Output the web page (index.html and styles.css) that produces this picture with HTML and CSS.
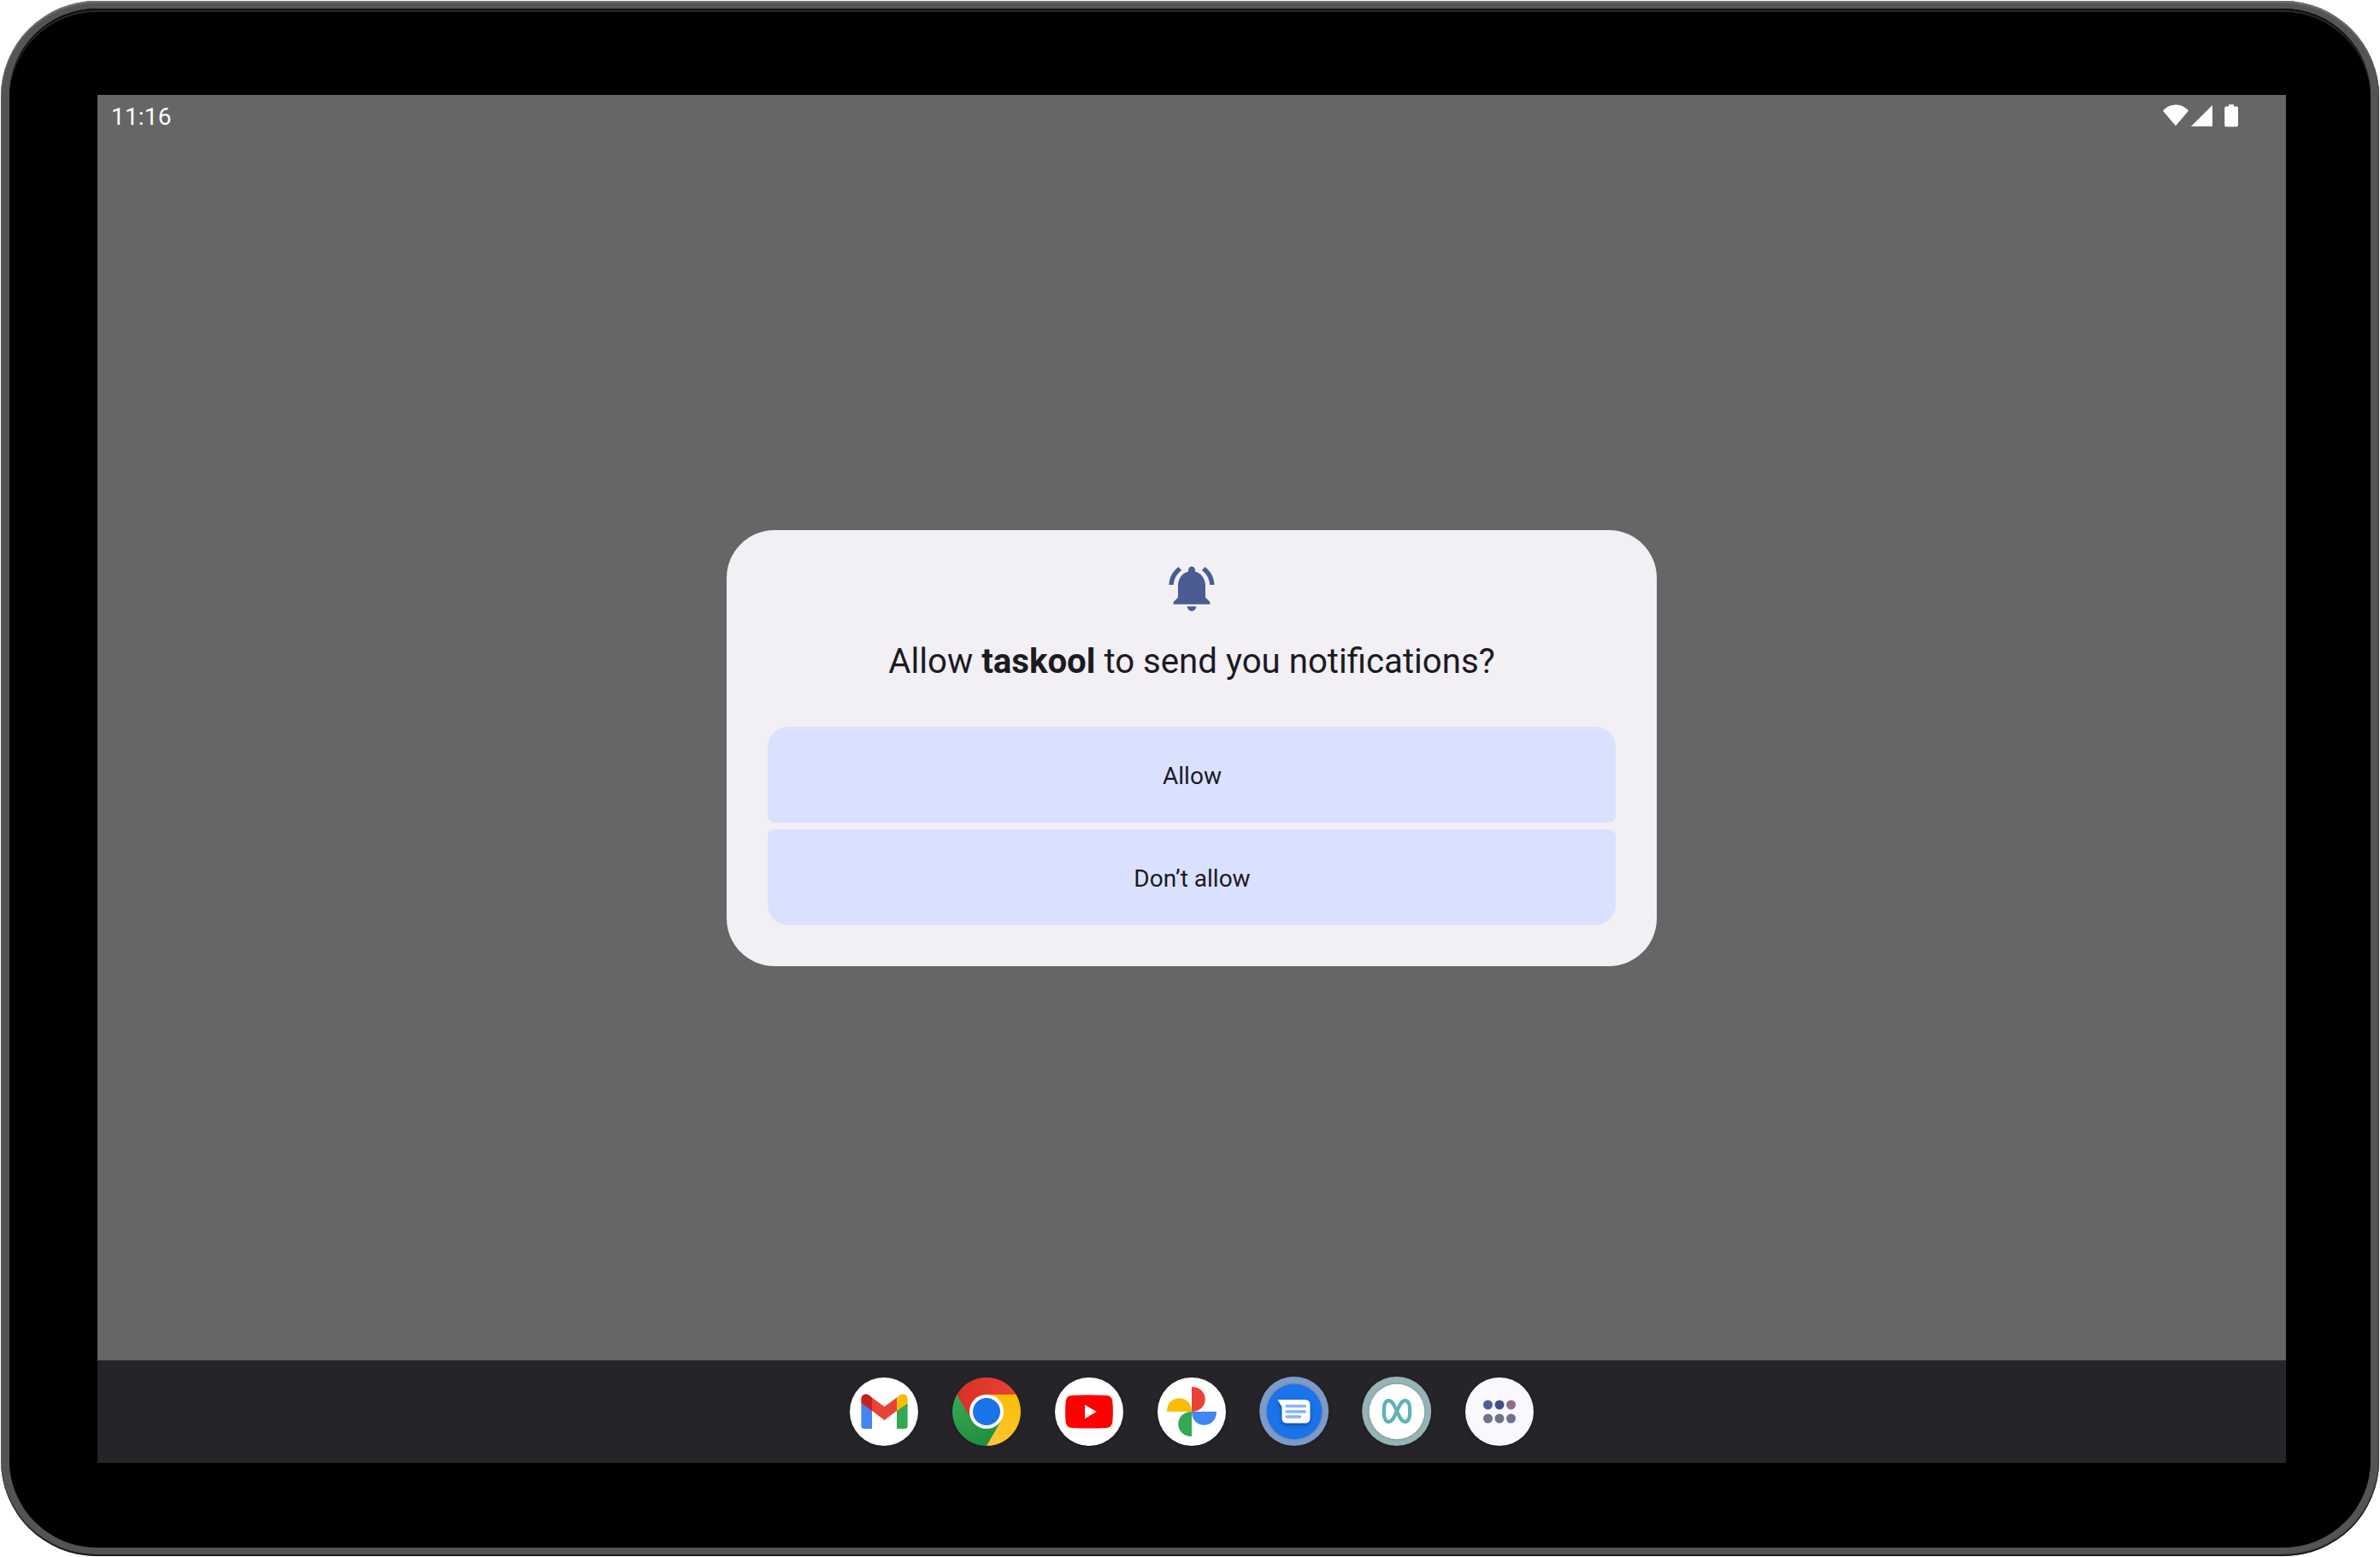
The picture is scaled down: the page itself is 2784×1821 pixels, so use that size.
FILE: index.html
```html
<!DOCTYPE html>
<html lang="en">
<head>
<meta charset="utf-8">
<title>Notification permission</title>
<link rel="stylesheet" href="styles.css">
</head>
<body>
<div class="device">
  <div class="bezel">
    <div class="screen">
      <header class="status-bar">
        <span class="clock">11:16</span>
        <svg class="status-icons" width="90" height="28" viewBox="0 0 90 28" fill="#fff">
          <path d="M0 7.5C8-1.8 22-1.8 30 7.5L15 25.3z"/>
          <path d="M58 1v24.7H33z"/>
          <path d="M77 .3h6v2.2h3.2q1.8 0 1.8 1.8v20.2q0 1.8-1.8 1.8H74q-1.8 0-1.8-1.8V4.3q0-1.8 1.8-1.8h3z"/>
        </svg>
      </header>
      <main class="scrim">
        <section class="dialog" role="dialog">
          <svg class="bell" viewBox="0 0 24 24" fill="#4b5c92">
            <path d="M7.58 4.08L6.15 2.65C3.75 4.48 2.17 7.3 2.03 10.5h2c.15-2.65 1.51-4.97 3.55-6.42zM19.97 10.5h2c-.15-3.2-1.73-6.02-4.12-7.85l-1.42 1.43c2.02 1.45 3.39 3.77 3.54 6.42zM18 11c0-3.07-1.64-5.64-4.5-6.32V4c0-.83-.67-1.6-1.5-1.6s-1.5.77-1.5 1.6v.68C7.63 5.36 6 7.92 6 11v5l-2 2v1h16v-1l-2-2zM10 20a2 2 0 0 0 4 0z"/>
          </svg>
          <h1 class="title">Allow <b>taskool</b> to send you notifications?</h1>
          <div class="actions">
            <button class="action">Allow</button>
            <button class="action">Don’t allow</button>
          </div>
        </section>
      </main>
      <nav class="taskbar">
        <svg class="app" viewBox="0 0 80 80">
          <circle cx="40" cy="40" r="40" fill="#fff"/>
          <path d="M13.4 30v26.5q0 3.5 3.5 3.5H26V38.5z" fill="#4285f4"/>
          <path d="M67.7 30v26.5q0 3.5-3.5 3.5H55V38.5z" fill="#34a853"/>
          <path d="M26 39V23.5L40.5 34.3 55 23.5V39L40.5 50z" fill="#ea4335"/>
          <path d="M13.4 30.2V25c0-5.2 6-7.2 9.5-4L26 23.5V39z" fill="#c5221f"/>
          <path d="M67.7 30.2V25c0-5.2-6-7.2-9.5-4L55 23.5V39z" fill="#fbbc04"/>
        </svg>
        <svg class="app" viewBox="0 0 80 80">
          <defs>
            <linearGradient id="cr" x1="0" x2="1"><stop stop-color="#d93025"/><stop offset="1" stop-color="#ea4335"/></linearGradient>
            <linearGradient id="cy" x1=".3" y1="1" x2=".6" y2="0"><stop stop-color="#fcc934"/><stop offset="1" stop-color="#fbbc04"/></linearGradient>
            <linearGradient id="cg" x1=".7" y1="1" x2=".2" y2="0"><stop stop-color="#1e8e3e"/><stop offset="1" stop-color="#34a853"/></linearGradient>
          </defs>
          <path d="M40 40L5.36 20A40 40 0 0 0 40 80L60 46z" fill="url(#cg)"/>
          <path d="M40 20h34.64A40 40 0 0 1 40 80L57.32 50z" fill="url(#cy)"/>
          <path d="M5.36 20A40 40 0 0 1 74.64 20H40L22.68 50z" fill="url(#cr)"/>
          <circle cx="40" cy="40" r="20" fill="#fff"/>
          <circle cx="40" cy="40" r="16" fill="#1a73e8"/>
        </svg>
        <svg class="app" viewBox="0 0 80 80">
          <circle cx="40" cy="40" r="40" fill="#fff"/>
          <path d="M20 21Q40 19.8 60 21 66.5 21.3 67.3 27.5 68.5 40 67.3 52.500 66.5 58.7 60 59 40 60.2 20 59 13.5 58.7 12.7 52.5 11.5 40 12.7 27.5 13.5 21.3 20 21z" fill="#f00"/>
          <path d="M35 32v16.2L48.7 40z" fill="#fff"/>
        </svg>
        <svg class="app" viewBox="0 0 80 80">
          <circle cx="40" cy="40" r="40" fill="#fff"/>
          <path d="M40 11c21 0 21 29 0 29z" fill="#ea4335"/>
          <path d="M69 40c0 21-29 21-29 0z" fill="#4285f4"/>
          <path d="M40 69c-21 0-21-29 0-29z" fill="#34a853"/>
          <path d="M11 40c0-21 29-21 29 0z" fill="#fbbc04"/>
        </svg>
        <svg class="app" viewBox="0 0 80 80">
          <circle cx="39.7" cy="39.5" r="40.5" fill="#7c9bc9"/>
          <circle class="badge-disc" cx="40" cy="40" r="32.3" fill="#1a73e8"/>
          <path class="bubble" d="M20.5 26H52.5q6 0 6 6V47.5q0 6-6 6H31.5q-6 0-6-6V34.5z" fill="#fff"/>
          <path d="M31 33.5h21.5M31 40h21.5M31 46h15.5" stroke="#8ab4f8" stroke-width="3.4" stroke-linecap="round"/>
        </svg>
        <svg class="app" viewBox="0 0 80 80">
          <circle cx="39.7" cy="39.5" r="40.5" fill="#96b3b6"/>
          <circle class="badge-disc" cx="40" cy="40" r="32.3" fill="#fff"/>
          <path d="M40 39.5C37.2 34 35.4 27.2 30.3 27.2 26.600 27.2 24.8 32.500 24.8 39.5S26.600 51.8 30.3 51.8C35.4 51.8 37.2 45 40 39.5S44.600 27.2 49.7 27.2C53.400 27.2 55.2 32.500 55.2 39.500S53.400 51.800 49.700 51.800C44.600 51.800 42.800 45 40 39.500z" fill="none" stroke="#5fb1b7" stroke-width="4.2"/>
        </svg>
        <svg class="app" viewBox="0 0 80 80">
          <circle cx="40" cy="40" r="40" fill="#faf8ff"/>
          <circle cx="26.5" cy="32" r="5.5" fill="#4b5f96"/>
          <circle cx="40" cy="32" r="5.5" fill="#3e5088"/>
          <circle cx="53.5" cy="32" r="5.5" fill="#8c6b8b"/>
          <g fill="#6f7389"><circle cx="26.5" cy="48" r="5.5"/><circle cx="40" cy="48" r="5.5"/><circle cx="53.5" cy="48" r="5.5"/></g>
        </svg>
      </nav>
    </div>
  </div>
</div>
</body>
</html>
```
FILE: styles.css
```css
* { box-sizing: border-box; }

body {
  margin: 0;
  width: 2784px;
  height: 1821px;
  padding: 1px;
  background: #fff;
  font-family: Roboto, sans-serif;
  overflow: hidden;
}

.device {
  width: 2782px;
  height: 1819px;
  padding: 9px 10px 10px;
  border-radius: 112px;
  background: #545454;
  box-shadow: inset 0 2px 2px #757575, inset 0 -2px 1px #1a1a1a, inset -1px 0 1px #333;
}

.bezel {
  display: flex;
  width: 100%;
  height: 100%;
  padding: 101px 99px 99px 103px;
  border-radius: 102px;
  background: #000;
  box-shadow: inset 0 2px #111, inset 0 4px #282828;
}

.screen {
  display: flex;
  flex-direction: column;
  flex: none;
  width: 2560px;
  height: 1600px;
  background: #666;
}

.status-bar {
  display: flex;
  justify-content: space-between;
  align-items: center;
  height: 50px;
  padding: 0 54px 0 16px;
  color: #fff;
}

.clock {
  padding-top: 1px;
  font-size: 28px;
  line-height: 48px;
  letter-spacing: 0.2px;
}

.status-icons { display: block; }

.scrim {
  flex: 1;
  display: flex;
  flex-direction: column;
  align-items: center;
  padding-top: 459px;
}

.dialog {
  display: flex;
  flex-direction: column;
  align-items: center;
  width: 1088px;
  height: 510px;
  padding: 36px 48px 48px;
  border-radius: 56px;
  background: #f2eff5;
  color: #1b1b21;
}

.bell { width: 64px; height: 64px; }

.title {
  margin: 30px 0 0;
  font-size: 40.2px;
  line-height: 48px;
  font-weight: 400;
}

.title b { font-weight: 700; }

.actions {
  display: flex;
  flex-direction: column;
  gap: 8px;
  width: 100%;
  margin-top: auto;
}

.action {
  height: 112px;
  padding: 3px 0 0 1px;
  border: 0;
  border-radius: 24px 24px 8px 8px;
  background: #dae1ff;
  color: #1b1b21;
  font: 400 28px/32px Roboto, sans-serif;
}

.action + .action { border-radius: 8px 8px 24px 24px; }

.taskbar {
  display: flex;
  justify-content: center;
  align-items: center;
  gap: 40px;
  height: 120px;
  background: #252429;
}

.app {
  width: 80px;
  height: 80px;
  overflow: visible;
  filter: drop-shadow(0 1px 2px rgba(0, 0, 0, 0.25));
}

.badge-disc { filter: drop-shadow(0 0 1.5px rgba(0, 0, 0, 0.25)); }

.bubble { filter: drop-shadow(0 2px 2px rgba(0, 0, 0, 0.35)); }
```
